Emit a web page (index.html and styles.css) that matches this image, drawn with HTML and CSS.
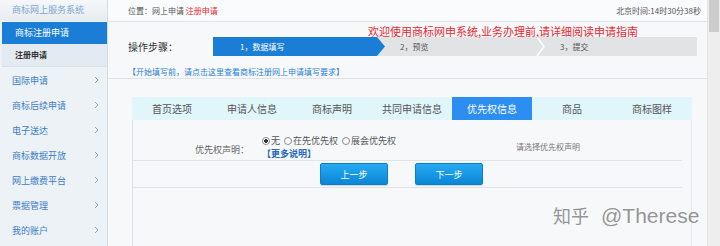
FILE: index.html
```html
<!DOCTYPE html>
<html lang="zh-CN">
<head>
  <meta charset="utf-8">
  <meta name="viewport" content="width=device-width, initial-scale=1.0">
  <link rel="stylesheet" href="styles.css">
</head>
<body>
  <aside class="sidebar">
    <div class="side-head">商标网上服务系统</div>
    <div class="side-active">商标注册申请</div>
    <div class="side-sub">注册申请</div>
    <ul class="side-menu">
      <li>国际申请<svg class="chev" viewBox="0 0 5 8"><polyline points="1,1 4,4 1,7"/></svg></li>
      <li>商标后续申请<svg class="chev" viewBox="0 0 5 8"><polyline points="1,1 4,4 1,7"/></svg></li>
      <li>电子送达<svg class="chev" viewBox="0 0 5 8"><polyline points="1,1 4,4 1,7"/></svg></li>
      <li>商标数据开放<svg class="chev" viewBox="0 0 5 8"><polyline points="1,1 4,4 1,7"/></svg></li>
      <li>网上缴费平台<svg class="chev" viewBox="0 0 5 8"><polyline points="1,1 4,4 1,7"/></svg></li>
      <li>票据管理<svg class="chev" viewBox="0 0 5 8"><polyline points="1,1 4,4 1,7"/></svg></li>
      <li>我的账户<svg class="chev" viewBox="0 0 5 8"><polyline points="1,1 4,4 1,7"/></svg></li>
    </ul>
  </aside>

  <main class="main">
    <div class="topbar">
      <span>位置：网上申请 <em>注册申请</em></span>
      <span>北京时间:14时30分38秒</span>
    </div>

    <!-- 操作步骤 -->
    <div class="guide">
      <div class="steps">
        <span class="steps-label">操作步骤：</span>
        <div class="steps-right">
          <p class="notice">欢迎使用商标网申系统,业务办理前,请详细阅读申请指南</p>
          <div class="bar">
            <div class="step step-on">1，数据填写</div>
            <div class="step step-2">2，预览</div>
            <div class="step step-3">
              <svg class="sep" viewBox="0 0 10 19"><polyline points="1,0 8,9.5 1,19"/></svg>
              3，提交
            </div>
          </div>
        </div>
      </div>
      <a class="guide-link">【开始填写前，请点击这里查看商标注册网上申请填写要求】</a>
    </div>

    <!-- 填写表单 -->
    <div class="form">
      <ul class="tabs">
        <li>首页选项</li>
        <li>申请人信息</li>
        <li>商标声明</li>
        <li>共同申请信息</li>
        <li class="tab-on">优先权信息</li>
        <li>商品</li>
        <li>商标图样</li>
      </ul>
      <div class="panel">
        <div class="field">
          <span class="field-label">优先权声明：</span>
          <div class="field-opts">
            <div class="radios">
              <span class="radio radio-on"></span>无<span class="radio"></span>在先优先权<span class="radio"></span>展会优先权
            </div>
            <a class="more">【更多说明】</a>
          </div>
          <span class="field-hint">请选择优先权声明</span>
        </div>
        <div class="actions">
          <button class="btn">上一步</button>
          <button class="btn">下一步</button>
        </div>
      </div>
    </div>
  </main>

  <div class="scrollbar"><div class="thumb"></div></div>

  <div class="watermark"><span class="wm-cn">知乎</span><span class="wm-en">@Therese</span></div>
</body>
</html>
```

FILE: styles.css
```css
:root {
  --blue-100: #1b7ed6;
  --blue-200: #2c8ef0;
  --link: #2f7fd4;
  --menu: #3b7cc6;
  --red: #e8282f;
  --line: #dfe4e9;
  --bg-100: #f6f8fa;
  --bg-side: #edf2f7;
}
body {
  margin: 0;
  width: 720px;
  height: 246px;
  overflow: hidden;
  display: flex;
  background: var(--bg-100);
  font-family: "Noto Sans CJK SC", "Noto Sans", sans-serif;
  color: #333;
  position: relative;
}
ul {
  list-style: none;
  margin: 0;
  padding: 0;
}
p {
  margin: 0;
}
/* 左侧菜单 */
.sidebar {
  width: 107px;
  flex-shrink: 0;
  border-right: 1px solid #d3dbe3;
  background: var(--bg-side);
  display: flex;
  flex-direction: column;
}
.side-head {
  height: 21px;
  line-height: 20px;
  padding-left: 12px;
  font-size: 9px;
  color: #7ea6d0;
  background: linear-gradient(#f5f7f9, #e7ecf1);
}
.side-active {
  height: 22px;
  line-height: 22px;
  margin: 1px 0 0 2px;
  padding-left: 13px;
  font-size: 9px;
  color: #fff;
  background: var(--blue-100);
}
.side-sub {
  height: 22px;
  line-height: 22px;
  margin-left: 2px;
  padding-left: 13px;
  font-size: 8px;
  font-weight: bold;
  color: #333;
  background: #e3eaf1;
  border-bottom: 1px solid #d9e0e8;
}
.side-menu li {
  height: 25px;
  display: flex;
  align-items: center;
  justify-content: space-between;
  padding: 1px 8px 0 12px;
  box-sizing: border-box;
  font-size: 9px;
  color: var(--menu);
}
.chev {
  width: 5px;
  height: 8px;
  fill: none;
  stroke: #9aa4ae;
  stroke-width: 1;
}
/* 主区域 */
.main {
  flex: 1;
  display: flex;
  flex-direction: column;
}
.topbar {
  height: 21px;
  flex-shrink: 0;
  display: flex;
  align-items: center;
  justify-content: space-between;
  padding: 0 6px 0 20px;
  border-bottom: 1px solid var(--line);
  font-size: 8px;
  color: #555;
  background: #fafbfc;
}
.topbar em {
  font-style: normal;
  color: var(--red);
}
.guide {
  flex-shrink: 0;
  padding: 4px 0 0 20px;
  height: 52px;
  border-bottom: 1px solid var(--line);
}
.steps {
  display: flex;
}
.steps-label {
  width: 85px;
  margin-top: 11px;
  line-height: 19px;
  font-size: 10px;
  color: #333;
}
.notice {
  height: 11px;
  line-height: 11px;
  padding-left: 155px;
  font-size: 11px;
  color: var(--red);
  white-space: nowrap;
}
.bar {
  width: 484px;
  height: 19px;
  display: flex;
  background: #e2e3e4;
  font-size: 8px;
  line-height: 19px;
}
.step {
  position: relative;
  color: #555;
}
.step-on {
  width: 145px;
  padding-left: 27px;
  color: #fff;
  background: var(--blue-100);
  clip-path: polygon(0 0, calc(100% - 8px) 0, 100% 50%, calc(100% - 8px) 100%, 0 100%);
}
.step-2 {
  width: 140px;
  padding-left: 15px;
}
.step-3 {
  flex: 1;
  padding-left: 20px;
}
.sep {
  position: absolute;
  left: -4px;
  top: 0;
  width: 10px;
  height: 19px;
  fill: none;
  stroke: #fff;
  stroke-width: 1.5;
}
.guide-link {
  display: block;
  margin-top: 10px;
  line-height: 12px;
  font-size: 8px;
  color: var(--link);
}
/* 表单 */
.form {
  flex: 1;
  display: flex;
  flex-direction: column;
  width: 560px;
  margin: 18px 0 0 24px;
}
.tabs {
  display: flex;
  height: 23px;
  background: #e0f6fb;
}
.tabs li {
  width: 80px;
  text-align: center;
  line-height: 23px;
  font-size: 10px;
  color: #555;
}
.tabs .tab-on {
  background: var(--blue-200);
  color: #fff;
}
.panel {
  flex: 1;
  border-left: 1px solid #dce2e8;
  border-right: 1px solid #e6eaee;
}
.field {
  height: 40px;
  display: flex;
  margin-right: 9px;
  border-bottom: 1px solid var(--line);
}
.field-label {
  width: 116px;
  padding-top: 23px;
  line-height: 13px;
  text-align: right;
  font-size: 9px;
  color: #666;
}
.field-opts {
  width: 254px;
  padding: 14px 0 0 13px;
  line-height: 13px;
  font-size: 9px;
  color: #555;
}
.radio {
  display: inline-block;
  width: 6px;
  height: 6px;
  border: 1px solid #888;
  border-radius: 50%;
  margin: 0 1px 0 4px;
  vertical-align: -1px;
  background: #fff;
}
.radio-on {
  margin-left: 0;
  background: radial-gradient(#333 38%, #fff 48%);
}
.more {
  display: block;
  font-weight: bold;
  color: #2868c0;
}
.field-hint {
  padding-top: 20px;
  line-height: 13px;
  font-size: 8px;
  color: #777;
}
.actions {
  height: 27px;
  display: flex;
  gap: 27px;
  padding: 2px 0 0 187px;
  box-sizing: border-box;
  margin-right: 9px;
  border-bottom: 1px solid var(--line);
}
.btn {
  width: 68px;
  height: 22px;
  padding: 0;
  border: 1px solid #0b7fcc;
  border-radius: 2px;
  font-family: inherit;
  font-size: 9px;
  color: #fff;
  background: linear-gradient(#27aaf0, #0a87d8);
  box-shadow: 0 1px 1px rgba(0,0,0,0.15);
}
/* 滚动条 */
.scrollbar {
  width: 12px;
  flex-shrink: 0;
  background: #eeeeee;
  border-left: 1px solid #e4e4e4;
}
.thumb {
  height: 32px;
  margin: 0 1px;
  background: #cccccc;
}
/* 水印 */
.watermark {
  position: absolute;
  left: 553px;
  top: 203px;
  color: rgba(115,115,115,0.75);
  white-space: nowrap;
  line-height: 24px;
}
.wm-cn {
  font-size: 18px;
}
.wm-en {
  margin-left: 12px;
  font-family: "Liberation Sans", sans-serif;
  font-size: 21px;
}
```
